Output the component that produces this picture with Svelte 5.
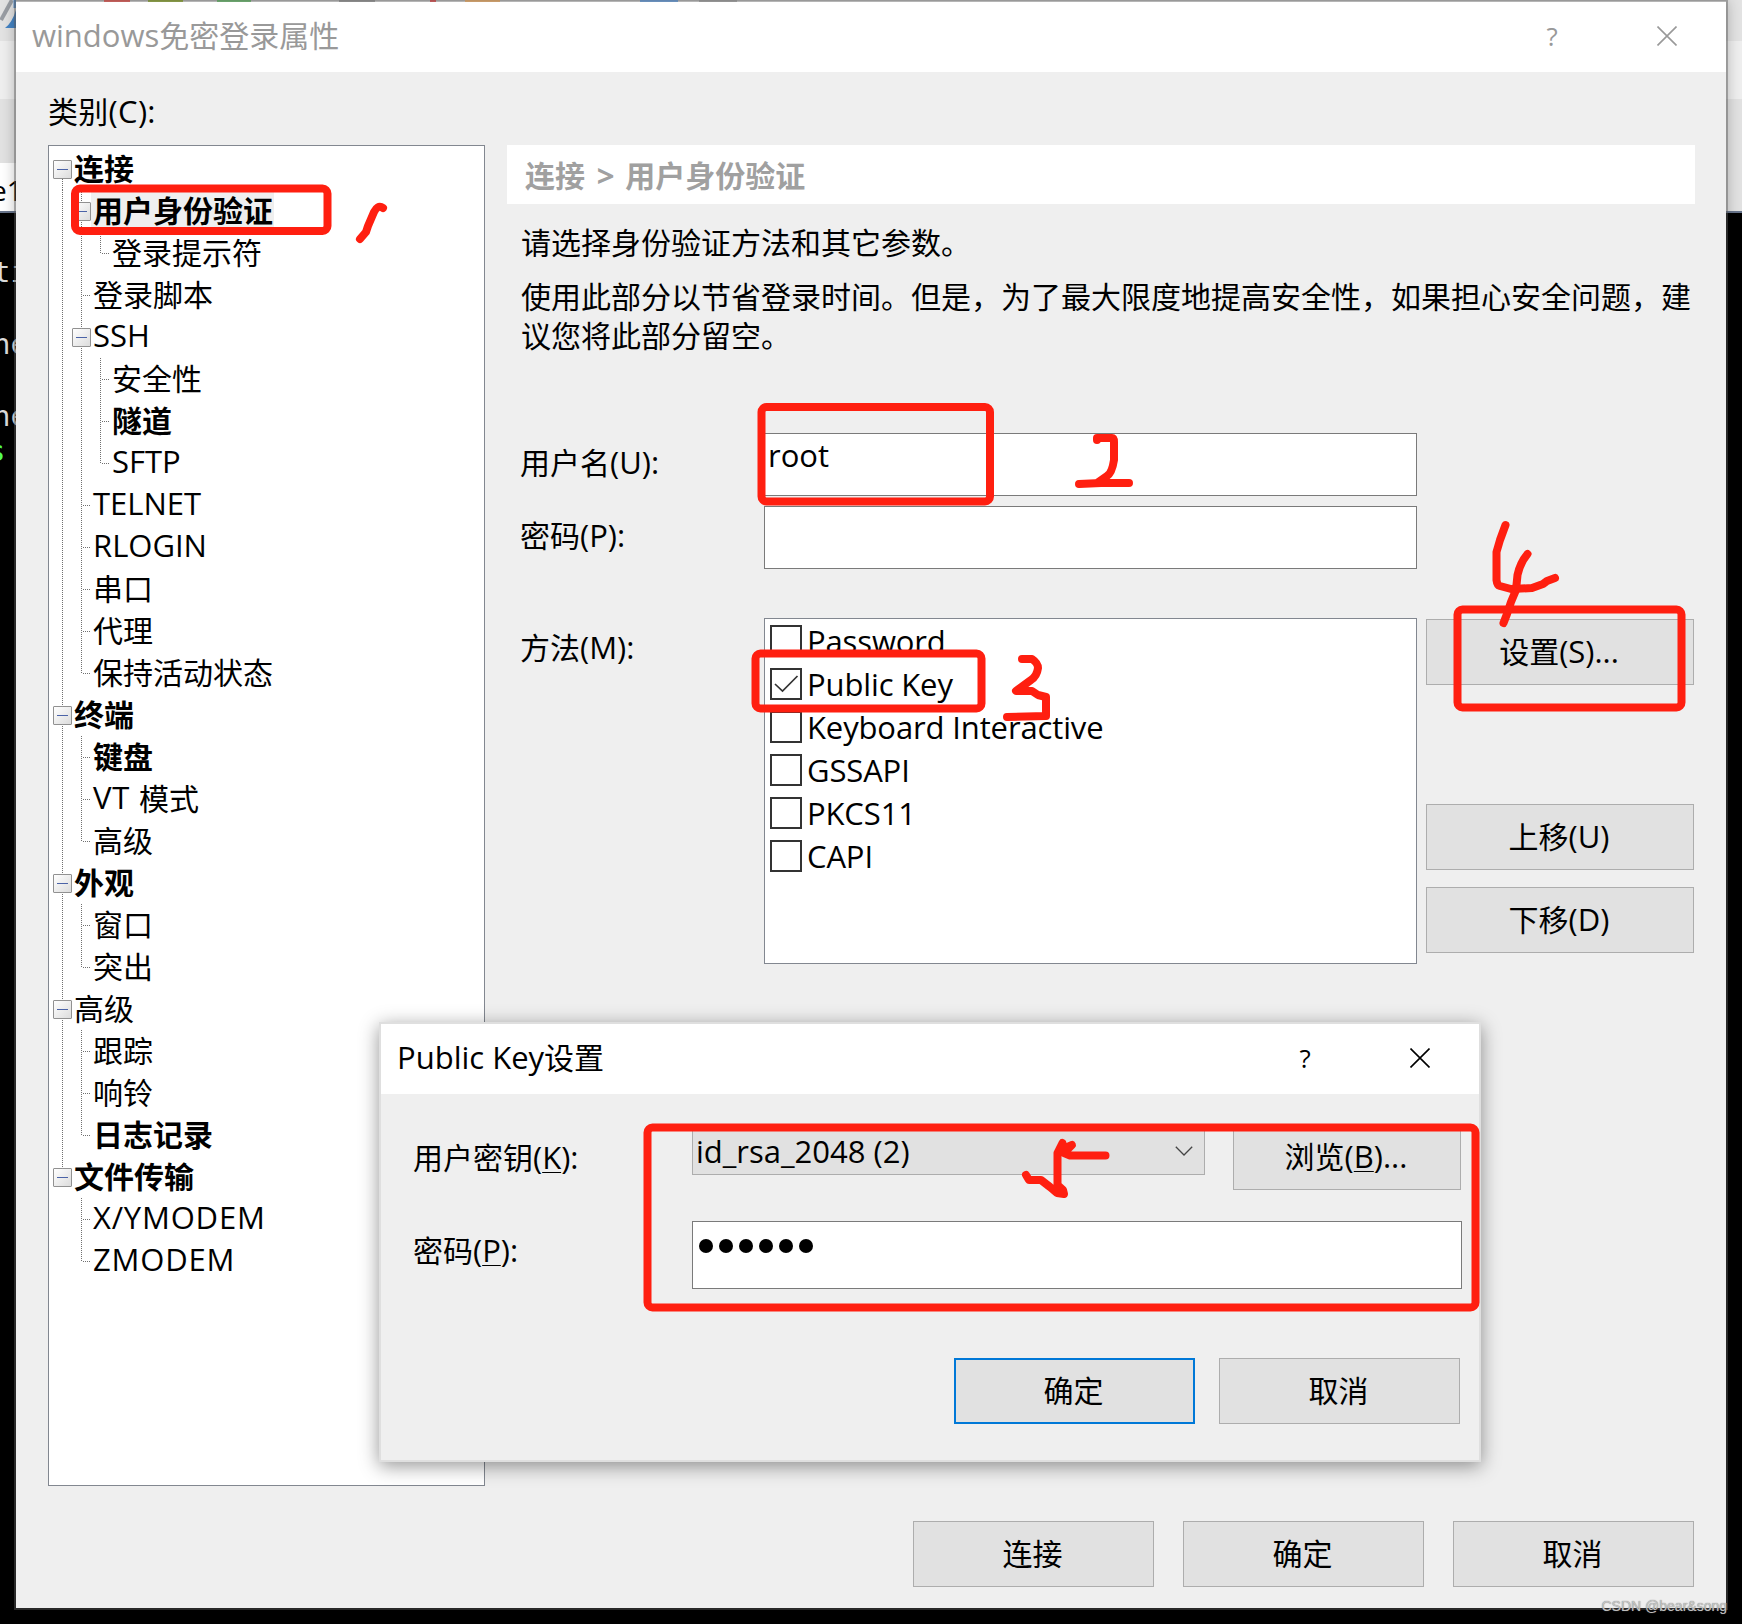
<script>
  const tree = [
    { label: "连接", bold: true, children: [
      { label: "用户身份验证", bold: true, selected: true, children: [{ label: "登录提示符" }] },
      { label: "登录脚本" },
      { label: "SSH", children: [
        { label: "安全性" },
        { label: "隧道", bold: true },
        { label: "SFTP" },
      ] },
      { label: "TELNET" },
      { label: "RLOGIN" },
      { label: "串口" },
      { label: "代理" },
      { label: "保持活动状态" },
    ] },
    { label: "终端", bold: true, children: [
      { label: "键盘", bold: true },
      { label: "VT 模式", wide: true },
      { label: "高级" },
    ] },
    { label: "外观", bold: true, children: [{ label: "窗口" }, { label: "突出" }] },
    { label: "高级", children: [
      { label: "跟踪" },
      { label: "响铃" },
      { label: "日志记录", bold: true },
    ] },
    { label: "文件传输", bold: true, children: [
      { label: "X/YMODEM", wide: true },
      { label: "ZMODEM", wide: true },
    ] },
  ]

  // every row carries one guide cell per ancestor level plus its own
  function flatten(nodes, guides = []) {
    return nodes.flatMap((node, i) => {
      const last = i === nodes.length - 1
      const first = i === 0 && guides.length === 0
      const row = { ...node, guides, own: first ? "down" : last ? "up" : "full" }
      const below = [...guides, last ? "" : "full"]
      return [row, ...flatten(node.children ?? [], below)]
    })
  }
  const rows = flatten(tree)

  let methods = [
    { name: "Password", checked: false },
    { name: "Public Key", checked: true },
    { name: "Keyboard Interactive", checked: false },
    { name: "GSSAPI", checked: false },
    { name: "PKCS11", checked: false },
    { name: "CAPI", checked: false },
  ]

  // slivers of the toolbar above the window
  const slivers = [
    [104, 26, "#c43c35"],
    [148, 35, "#72891a"],
    [217, 34, "#4d9a50"],
    [339, 36, "#777"],
    [430, 6, "#b33"],
    [465, 35, "#d0914c"],
    [640, 38, "#4a7fbd"],
    [699, 38, "#858585"],
  ]

  // latin runs are set slightly larger than the chinese ones
  const runs = (text) => text.match(/[\x20-\x7e]+|[^\x20-\x7e]+/g)
</script>

{#snippet mixed(text)}
  {#each runs(text) as run}<span class:latin={run.charCodeAt(0) < 127}>{run}</span>{/each}
{/snippet}

<div class="desktop">
  <div class="behind">
    <svg class="logo" width="16" height="30" viewBox="0 0 16 30">
      <path d="M1 20 L12 0" stroke="#999da3" stroke-width="4" />
      <path d="M5 28 Q12 23 16 10 V28 Z" fill="#4585c6" />
      <path d="M16 0 V8" stroke="#5b93d0" stroke-width="5" />
    </svg>
    <span class="tab">e1</span>
    <span class="term t1">ti</span>
    <span class="term t2">ne</span>
    <span class="term t3">ne</span>
    <span class="term t4 green">s</span>
  </div>

  <div class="window">
    <header class="titlebar inactive">
      <span class="title">{@render mixed("windows免密登录属性")}</span>
      <span class="help">?</span>
      <svg class="close" width="20" height="20" viewBox="0 0 20 20">
        <path d="M0.5 0.5 L19.5 19.5 M19.5 0.5 L0.5 19.5" />
      </svg>
    </header>

    <div class="body">
      <aside>
        <div class="category">{@render mixed("类别(C):")}</div>
        <div class="tree">
          {#each rows as row}
            <div class="row">
              {#each row.guides as guide}
                <span class="cell {guide}"></span>
              {/each}
              <span class="cell {row.own}">
                {#if row.children}
                  <i class="toggle"></i>
                {:else}
                  <i class="branch"></i>
                {/if}
              </span>
              <span
                class="name"
                class:bold={row.bold}
                class:selected={row.selected}
                class:wide={row.wide}
              >
                {@render mixed(row.label)}
              </span>
            </div>
          {/each}
        </div>
      </aside>

      <main>
        <h1>连接 <span class="gt">&gt;</span> 用户身份验证</h1>
        <p class="intro">请选择身份验证方法和其它参数。</p>
        <p class="note">使用此部分以节省登录时间。但是，为了最大限度地提高安全性，如果担心安全问题，建议您将此部分留空。</p>

        <div class="form">
          <label for="user">{@render mixed("用户名(U):")}</label>
          <div class="field" id="user">root</div>
          <label for="pass">{@render mixed("密码(P):")}</label>
          <div class="field" id="pass"></div>
        </div>

        <div class="methods">
          <span class="label">{@render mixed("方法(M):")}</span>
          <div class="list">
            {#each methods as method}
              <div class="method">
                <span class="check">
                  {#if method.checked}
                    <svg width="28" height="28" viewBox="0 0 28 28">
                      <path d="M3 14 L10.5 21 L25.5 6" />
                    </svg>
                  {/if}
                </span>
                {method.name}
              </div>
            {/each}
          </div>
          <div class="side">
            <button>{@render mixed("设置(S)...")}</button>
            <button class="up">{@render mixed("上移(U)")}</button>
            <button>{@render mixed("下移(D)")}</button>
          </div>
        </div>
      </main>
    </div>

    <footer>
      <button>连接</button>
      <button>确定</button>
      <button>取消</button>
    </footer>
  </div>

  <div class="dialog">
    <header class="titlebar">
      <span class="title">{@render mixed("Public Key设置")}</span>
      <span class="help">?</span>
      <svg class="close" width="20" height="20" viewBox="0 0 20 20">
        <path d="M0.5 0.5 L19.5 19.5 M19.5 0.5 L0.5 19.5" />
      </svg>
    </header>
    <div class="line key">
      <span class="label">用户密钥<span class="latin">(<u>K</u>):</span></span>
      <div class="combo">
        id_rsa_2048 (2)
        <svg width="18" height="10" viewBox="0 0 18 10"><path d="M0.8 0.8 L9 9 L17.2 0.8" /></svg>
      </div>
      <button class="browse">浏览<span class="latin">(<u>B</u>)...</span></button>
    </div>
    <div class="line phrase">
      <span class="label">密码<span class="latin">(<u>P</u>):</span></span>
      <div class="secret">
        {#each Array(6) as _}<i></i>{/each}
      </div>
    </div>
    <div class="actions">
      <button class="default">确定</button>
      <button>取消</button>
    </div>
  </div>

  <svg class="marks" width="1742" height="1624" viewBox="0 0 1742 1624">
    <g class="slivers">
      {#each slivers as [x, w, fill]}
        <rect {x} y="0" width={w} height="2" {fill} />
      {/each}
    </g>
    <g class="pen">
      <rect x="75" y="188.5" width="252.5" height="42.5" rx="5" />
      <rect x="761.5" y="407" width="228.5" height="94.5" rx="5" />
      <rect x="755.5" y="653.5" width="226" height="55" rx="5" />
      <rect x="1457.5" y="609.5" width="224" height="98" rx="5" />
      <rect x="647.5" y="1127.5" width="828" height="180" rx="5" />
      <path d="M383 208 C379 205 376 208 374 212 L368 226 L366 232 L360 239" />
      <path d="M1097 440 V438 H1112 Q1114 438 1114 442 V460 Q1112 473 1107 476 L1097 483 M1079 484 L1101 483 H1129" />
      <path d="M1022 659 H1032 Q1038 663 1038 668 Q1037 676 1031 680 L1016 691 H1032 L1038 695 L1046 697 V716 L1007 717" />
      <path d="M1505.500 525 L1500 540 L1496.500 552 V580 Q1497 585 1500 586 L1511 589 L1532 588 L1543 584 L1547 581 L1555 578" />
      <path d="M1527.500 554 Q1520 563 1517.500 575 L1516 590 L1511 602 L1507 614 L1503.500 623" />
      <path d="M1026 1175 L1029 1180 H1041 L1050 1187 L1057 1193 L1064 1194 L1063 1190 L1057.500 1185 V1153 L1062.500 1143 L1063 1149 L1072 1145 L1064 1153 L1070 1155.500 H1105.500" />
    </g>
  </svg>
  <span class="watermark">CSDN @bear&amp;song</span>
</div>

<style>
  :global(body) {
    background: #000;
  }
  .desktop {
    position: relative;
    width: 1742px;
    height: 1624px;
    overflow: hidden;
    background: linear-gradient(#e3e3e3 41px, #efefef 41px 99px, #e2e2e2 99px 211px, #68758c 211px 213px, #000 213px);
    color: #000;
    font: 30px/40px "Open Sans", "Noto Sans CJK SC", sans-serif;
    text-spacing-trim: space-all;
  }
  .latin {
    font-size: 31px;
  }
  .behind {
    position: absolute;
    top: 0;
    left: 0;
    width: 16px;
    height: 1624px;
    overflow: hidden;
    white-space: nowrap;
  }
  .logo,
  .tab,
  .term {
    position: absolute;
    left: 0;
    fill: none;
  }
  .tab {
    top: 163px;
    width: 30px;
    height: 48px;
    background: #fff;
    font-size: 28px;
    line-height: 54px;
    text-indent: -9px;
  }
  .term {
    left: -7px;
    color: #ddd;
    font: 29px/36px "DejaVu Sans Mono", monospace;
  }
  .t1 { top: 254px; }
  .t2 { top: 326px; }
  .t3 { top: 398px; }
  .t4 { top: 433px; left: -12px; }
  .green {
    color: #5f5;
  }

  .window {
    box-sizing: border-box;
    position: relative;
    width: 1710px;
    height: 1608px;
    margin-left: 16px;
    padding-top: 2px;
    background: #efefef;
    box-shadow: 0 0 0 2px rgba(90, 90, 90, 0.45), 0 0 14px rgba(0, 0, 0, 0.3);
  }
  .window::before {
    content: "";
    position: absolute;
    top: 0;
    left: 0;
    right: 0;
    height: 2px;
    background: linear-gradient(#999 1px, #b5b5b5 1px);
  }
  .titlebar {
    display: flex;
    align-items: center;
    height: 70px;
    padding-left: 16px;
    background: #fff;
  }
  .titlebar .title {
    flex: 1;
    padding-bottom: 4px;
  }
  .help {
    width: 20px;
    margin-right: 95px;
    padding-bottom: 3px;
    font-size: 26px;
    text-align: center;
  }
  .close {
    margin: 0 49px 2px 0;
    fill: none;
    stroke: #000;
    stroke-width: 1.6;
  }
  .inactive {
    color: #999;
  }
  .inactive .close {
    stroke: #999;
  }

  .body {
    display: flex;
    gap: 22px;
    padding: 19px 31px 0 32px;
  }
  .category {
    height: 54px;
    letter-spacing: 0.3px;
  }
  .tree {
    box-sizing: border-box;
    width: 437px;
    height: 1341px;
    padding: 2px 0 0 4px;
    background: #fff;
    border: 1px solid #828790;
  }
  .row {
    display: flex;
    align-items: center;
    height: 42px;
  }
  .cell {
    position: relative;
    display: flex;
    align-items: center;
    width: 19px;
    height: 42px;
    flex: none;
  }
  .cell::before {
    content: "";
    position: absolute;
    left: 9px;
    top: 0;
    height: 42px;
    width: 1px;
  }
  .full::before,
  .up::before,
  .down::before {
    background: repeating-linear-gradient(#707070 0 1px, transparent 1px 2px);
  }
  .up::before {
    height: 21px;
  }
  .down::before {
    top: 21px;
    height: 21px;
  }
  .branch {
    width: 9px;
    height: 1px;
    margin-left: 10px;
    background: repeating-linear-gradient(90deg, transparent 0 1px, #707070 1px 2px);
  }
  .toggle {
    position: relative;
    box-sizing: border-box;
    width: 19px;
    height: 19px;
    border: 1px solid #919191;
    border-radius: 1px;
    background:
      linear-gradient(#4b63a7, #4b63a7) center / 11px 1px no-repeat,
      linear-gradient(135deg, #fff, #dcdcdc);
  }
  .name {
    padding: 0 1px 1px 2px;
    line-height: 38px;
    white-space: nowrap;
  }
  .name :global(.latin) {
    position: relative;
    top: -1.5px;
  }
  .wide :global(.latin) {
    letter-spacing: 0.8px;
  }
  .bold {
    font-weight: 700;
  }
  .selected {
    background: #efefef;
  }

  main {
    width: 1188px;
    padding-top: 54px;
  }
  h1 {
    height: 59px;
    margin: 0;
    padding-left: 18px;
    background: #fff;
    color: #a0a0a0;
    font-size: 30px;
    line-height: 62px;
  }
  .gt {
    margin: 0 3px 0 4px;
    font-size: 31px;
    line-height: 1;
  }
  p {
    width: 1176px;
    margin: 0 0 0 14px;
    line-height: 39px;
  }
  .intro {
    margin-top: 19px;
  }
  .note {
    margin-top: 15px;
  }
  .form {
    display: grid;
    grid-template-columns: 244px 653px;
    gap: 10px 0;
    margin: 78px 0 0 13px;
  }
  .form label {
    line-height: 59px;
  }
  .field {
    box-sizing: border-box;
    height: 63px;
    padding-left: 3px;
    background: #fff;
    border: 1px solid #7a7a7a;
    font-size: 31px;
    line-height: 42px;
  }
  .methods {
    display: flex;
    margin: 49px 0 0 13px;
  }
  .methods .label {
    width: 244px;
    line-height: 59px;
  }
  .list {
    box-sizing: border-box;
    width: 653px;
    height: 346px;
    margin-right: 9px;
    background: #fff;
    border: 1px solid #828790;
  }
  .method {
    display: flex;
    align-items: center;
    gap: 5px;
    height: 43px;
    padding-left: 5px;
    font-size: 31px;
    letter-spacing: -0.13px;
  }
  .check {
    box-sizing: border-box;
    width: 32px;
    height: 32px;
    border: 2px solid #333;
  }
  .check svg {
    display: block;
    fill: none;
    stroke: #333;
    stroke-width: 1.7;
  }
  button {
    box-sizing: border-box;
    width: 241px;
    height: 66px;
    padding: 0 2px 1px 0;
    background: #e1e1e1;
    border: 1px solid #adadad;
    border-radius: 0;
    color: #000;
    font: inherit;
  }
  .side {
    display: flex;
    flex-direction: column;
    padding-top: 1px;
  }
  .side button {
    width: 268px;
  }
  .side .up {
    margin: 119px 0 17px;
  }
  footer {
    display: flex;
    justify-content: flex-end;
    gap: 29px;
    padding: 35px 32px 0 0;
  }

  .dialog {
    position: absolute;
    top: 1022px;
    left: 379px;
    box-sizing: border-box;
    width: 1102px;
    height: 440px;
    background: #efefef;
    border: 2px solid #dfdfdf;
    box-shadow: 0 4px 18px rgba(0, 0, 0, 0.42);
  }
  .line {
    display: flex;
    margin-left: 32px;
  }
  .line .label {
    width: 279px;
  }
  .key {
    height: 97px;
    margin-top: 30px;
  }
  .key .label {
    line-height: 67px;
  }
  u {
    text-decoration-thickness: 1px;
    text-underline-offset: 3px;
  }
  .combo {
    box-sizing: border-box;
    display: flex;
    align-items: center;
    justify-content: space-between;
    width: 513px;
    height: 49px;
    margin: 2px 28px 0 0;
    padding: 0 11px 0 3px;
    background: #e1e1e1;
    border: 1px solid #adadad;
    font-size: 31px;
  }
  .combo svg {
    fill: none;
    stroke: #444;
    stroke-width: 1.3;
  }
  .browse {
    width: 228px;
  }
  .phrase .label {
    line-height: 59px;
  }
  .secret {
    box-sizing: border-box;
    display: flex;
    gap: 6px;
    width: 770px;
    height: 68px;
    padding: 17px 0 0 5.500px;
    background: #fff;
    border: 1px solid #7a7a7a;
  }
  .secret i {
    width: 14px;
    height: 14px;
    border-radius: 50%;
    background: #000;
  }
  .actions {
    display: flex;
    justify-content: flex-end;
    gap: 24px;
    margin: 69px 19px 0 0;
  }
  .default {
    border: 2px solid #0078d7;
  }

  .marks {
    position: absolute;
    top: 0;
    left: 0;
    pointer-events: none;
  }
  .slivers {
    opacity: 0.7;
  }
  .pen {
    fill: none;
    stroke: #ff1f10;
    stroke-width: 8;
    stroke-linecap: round;
    stroke-linejoin: round;
  }
  .watermark {
    position: absolute;
    right: 15px;
    top: 1597px;
    color: rgba(205, 205, 205, 0.9);
    font: 14px/18px "Liberation Sans", sans-serif;
    text-shadow: 0 0 1px #666;
  }
</style>
